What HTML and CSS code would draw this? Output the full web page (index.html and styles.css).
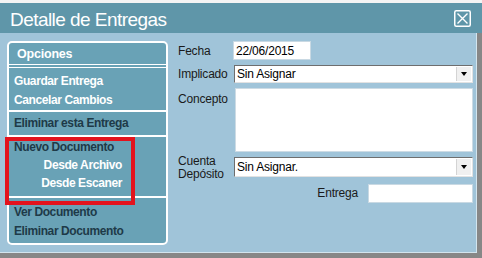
FILE: index.html
```html
<!DOCTYPE html>
<html>

<head>
    <title>Detalle de Entregas</title>
    <meta name="viewport" content="width=device-width,initial-scale=1" />
    <link rel="stylesheet" href="styles.css">
</head>

<body>
    <div class="window">
        <div class="top-strip"></div>
        <header class="titlebar">
            <h1>Detalle de Entregas</h1>
            <button class="close" type="button" aria-label="Cerrar">
                <svg width="17" height="17" viewBox="0 0 17 17">
                    <rect x="0.75" y="0.75" width="15.5" height="15.5" rx="1.5" fill="none" stroke="#fff" stroke-width="1.5" />
                    <path d="M3.5 3.5 L13.5 13.5 M13.5 3.5 L3.5 13.5" stroke="#fff" stroke-width="1.4" />
                </svg>
            </button>
        </header>

        <div class="content">
            <nav class="menu">
                <div class="menu-head">Opciones</div>
                <div class="menu-group first">
                    <a class="item light">Guardar Entrega</a>
                    <a class="item light">Cancelar Cambios</a>
                </div>
                <div class="menu-group single">
                    <a class="item dark">Eliminar esta Entrega</a>
                </div>
                <div class="menu-group docs">
                    <a class="item dark">Nuevo Documento</a>
                    <div class="sub">
                        <a class="item light">Desde Archivo</a>
                        <a class="item light">Desde Escaner</a>
                    </div>
                </div>
                <div class="menu-group last">
                    <a class="item dark">Ver Documento</a>
                    <a class="item dark">Eliminar Documento</a>
                </div>
            </nav>

            <form class="form">
                <label for="fecha" class="lbl">Fecha</label>
                <input type="text" id="fecha" class="field date" value="22/06/2015">

                <label for="implicado" class="lbl">Implicado</label>
                <div class="combo">
                    <select id="implicado">
                        <option>Sin Asignar</option>
                    </select>
                    <span class="arrow"></span>
                </div>

                <label for="concepto" class="lbl top">Concepto</label>
                <textarea id="concepto" class="field area"></textarea>

                <label for="cuenta" class="lbl two">Cuenta<br>Depósito</label>
                <div class="combo tall">
                    <select id="cuenta">
                        <option>Sin Asignar.</option>
                    </select>
                    <span class="arrow"></span>
                </div>

                <div class="entrega-row">
                    <label for="entrega" class="lbl">Entrega</label>
                    <input type="text" id="entrega" class="field entrega">
                </div>
            </form>
        </div>
    </div>
</body>

</html>
```

FILE: styles.css
```css
* {
    box-sizing: border-box;
}

body {
    margin: 0;
    font-family: "Liberation Sans", Arial, sans-serif;
}

.window {
    width: 482px;
    height: 258px;
    display: flex;
    flex-direction: column;
}

.top-strip {
    height: 3px;
    background: #f4f4f4;
}

.titlebar {
    height: 30px;
    background: #5f96a9;
    display: flex;
    align-items: flex-start;
    justify-content: space-between;
    padding: 0 11px 0 10px;
}

.titlebar h1 {
    margin: 0;
    padding-top: 6px;
    font-size: 19px;
    line-height: 22px;
    letter-spacing: -0.55px;
    font-weight: normal;
    color: #fff;
}

.close {
    margin-top: 7px;
    padding: 0;
    border: 0;
    background: none;
    width: 17px;
    height: 17px;
}

.close svg {
    display: block;
}

.content {
    flex: 1;
    display: flex;
    gap: 10px;
    padding: 8px 0 0 7px;
    background: #a0c4d9;
    border-right: 5px solid #878787;
    border-bottom: 5px solid #878787;
    box-shadow: inset -1px -1px 0 #d3e5ee;
}

/* left options panel */
.menu {
    position: relative;
    width: 161px;
    height: 204px;
    border: 2px solid #fff;
    border-radius: 5px;
    background: #69a2b6;
    font-weight: bold;
    font-size: 12px;
}

.menu-head {
    height: 22px;
    line-height: 23px;
    padding-left: 8px;
    font-size: 12.5px;
    letter-spacing: -0.2px;
    color: #fff;
    border-bottom: 1px solid #fff;
    margin-bottom: 2px;
}

.menu-group {
    display: flex;
    flex-direction: column;
    border-bottom: 2px solid #fff;
}

.menu-group.first {
    border-top: 1px solid #fff;
    height: 45px;
    padding-top: 4px;
}

.menu-group.single {
    height: 25px;
    padding-top: 2px;
}

.menu-group.docs {
    position: relative;
    height: 61px;
    padding-top: 1px;
}

.menu-group.docs::after {
    content: "";
    position: absolute;
    left: -4px;
    top: 0;
    width: 122px;
    height: 60px;
    border: 4px solid #e3131d;
}

.menu-group.last {
    border-bottom: 0;
    padding-top: 5px;
}

.item {
    display: block;
    padding-left: 5px;
    line-height: 19px;
    letter-spacing: -0.4px;
}

.docs .item {
    line-height: 18px;
}

.sub {
    width: 113px;
    text-align: right;
}

.light {
    color: #fff;
}

.dark {
    color: #1e3a48;
}

/* right form */
.form {
    width: 295px;
    display: grid;
    grid-template-columns: 56px 1fr;
    grid-template-rows: 19px 18px 64px 20px 19px;
    row-gap: 5px;
    align-content: start;
    font-size: 12px;
    letter-spacing: -0.2px;
}

.lbl {
    color: #1a1a1a;
    align-self: center;
}

.lbl.top {
    align-self: start;
    padding-top: 4px;
}

.lbl.two {
    line-height: 13px;
    margin-top: -2px;
    align-self: start;
}

.field {
    font-family: inherit;
    font-size: 12px;
    letter-spacing: -0.2px;
    background: #fff;
    border: 1px solid #c9d9e3;
    padding: 0 2px;
    margin: 0;
    outline: none;
}

.date {
    width: 78px;
    margin-left: -1px;
    height: 19px;
}

.area {
    resize: none;
    height: 64px;
    margin-left: 1px;
    border-color: #cddbe4;
}

.combo {
    position: relative;
    background: #fff;
    border-top: 1px solid #6e6e6e;
    border-left: 1px solid #6e6e6e;
    border-right: 1px solid #e2e2e2;
    border-bottom: 1px solid #e2e2e2;
}

.combo select {
    appearance: none;
    display: block;
    width: 100%;
    height: 100%;
    border: 0;
    padding: 0 0 0 2px;
    background: transparent;
    font-family: inherit;
    font-size: 12px;
    letter-spacing: -0.2px;
    color: #000;
    outline: none;
}

.arrow {
    position: absolute;
    right: 1px;
    top: 1px;
    bottom: 1px;
    width: 15px;
    background: #f0f0f0;
    border-left: 1px solid #d4d4d4;
}

.arrow::after {
    content: "";
    position: absolute;
    left: 4px;
    top: 50%;
    margin-top: -2px;
    border-top: 4px solid #000;
    border-left: 3.5px solid transparent;
    border-right: 3.5px solid transparent;
}

.entrega-row {
    grid-column: 1 / 3;
    margin-top: 3px;
    display: flex;
    justify-content: flex-end;
    align-items: center;
    gap: 10px;
}

.entrega {
    width: 105px;
    height: 19px;
}
```
